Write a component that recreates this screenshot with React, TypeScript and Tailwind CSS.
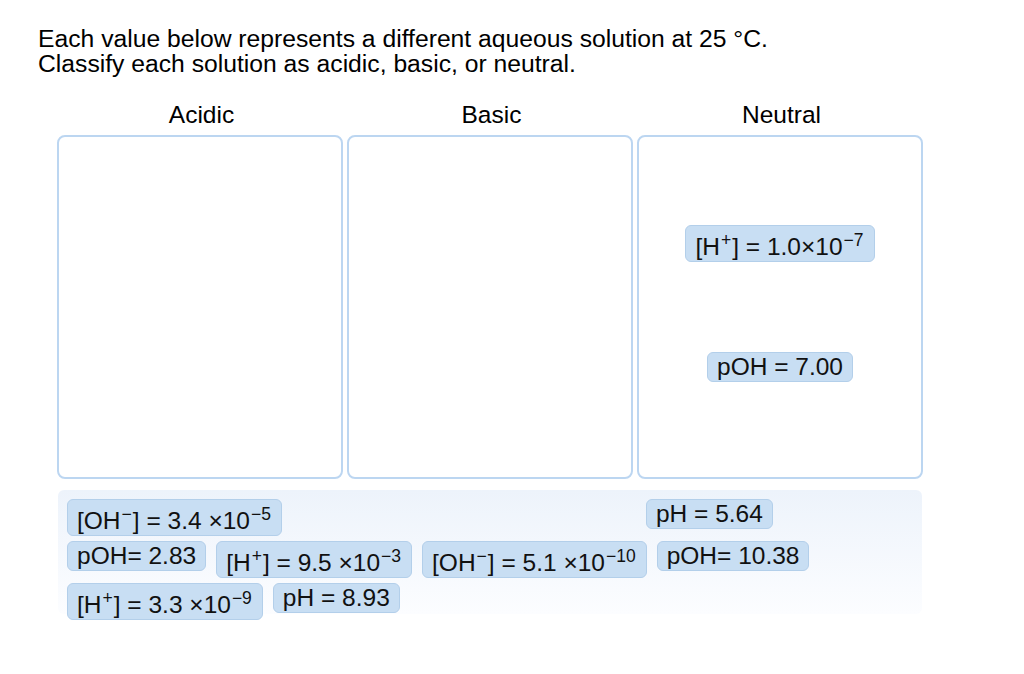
import React from 'react'

type Part = string | { sup: string }

type Chip = { id: string; parts: Part[] }

const sup = (s: string) => ({ sup: s })

const neutral: Chip[] = [
  { id: 'n1', parts: ['[H', sup('+'), '] = 1.0×10', sup('−7')] },
  { id: 'n2', parts: ['pOH = 7.00'] },
]

// unsorted answers, laid out in rows
const trayRows: { chip: Chip; ml?: string }[][] = [
  [
    { chip: { id: 't1', parts: ['[OH', sup('−'), '] = 3.4 ×10', sup('−5')] } },
    { chip: { id: 't2', parts: ['pH = 5.64'] }, ml: 'ml-[354px]' },
  ],
  [
    { chip: { id: 't3', parts: ['pOH= 2.83'] } },
    { chip: { id: 't4', parts: ['[H', sup('+'), '] = 9.5 ×10', sup('−3')] } },
    { chip: { id: 't5', parts: ['[OH', sup('−'), '] = 5.1 ×10', sup('−10')] } },
    { chip: { id: 't6', parts: ['pOH= 10.38'] } },
  ],
  [
    { chip: { id: 't7', parts: ['[H', sup('+'), '] = 3.3 ×10', sup('−9')] } },
    { chip: { id: 't8', parts: ['pH = 8.93'] } },
  ],
]

const ChipView = ({ chip, className = '' }: { chip: Chip; className?: string }) => {
  const hasSup = chip.parts.some((p) => typeof p !== 'string')
  return (
    <div
      className={`inline-block rounded-[6px] border border-[#b3cfea] bg-[#c8def3] px-[9px] text-[24.5px] leading-[28px] text-[#111] whitespace-nowrap ${
        hasSup ? 'pt-[7px]' : ''
      } ${className}`}
    >
      {chip.parts.map((p, i) =>
        typeof p === 'string' ? (
          <span key={i}>{p}</span>
        ) : (
          <sup key={i} className="text-[17.5px] mx-[1px]">
            {p.sup}
          </sup>
        )
      )}
    </div>
  )
}

export default function App() {
  const columns = ['Acidic', 'Basic', 'Neutral']

  return (
    <div
      className="w-[1024px] h-[674px] bg-white text-black overflow-hidden"
      style={{ fontFamily: '"Liberation Sans", Arial, sans-serif' }}
    >
      <div className="pl-[38px] pt-[26px] text-[24.7px] leading-[25px]">
        <p>Each value below represents a different aqueous solution at 25 °C.</p>
        <p>Classify each solution as acidic, basic, or neutral.</p>
      </div>

      <div className="ml-[57px] w-[866px]">
        <div className="grid grid-cols-3 gap-[4px] mt-[25px] text-[24.5px] leading-[28px]">
          {columns.map((c) => (
            <div key={c} className="text-center pl-[3px]">
              {c}
            </div>
          ))}
        </div>

        <div className="grid grid-cols-3 gap-[4px] mt-[6px]">
          <div className="h-[344px] rounded-[8px] border-2 border-[#bcd6f1]" />
          <div className="h-[344px] rounded-[8px] border-2 border-[#bcd6f1]" />
          <div className="h-[344px] rounded-[8px] border-2 border-[#bcd6f1] flex flex-col items-center pt-[88px] gap-[90px]">
            {neutral.map((c) => (
              <ChipView key={c.id} chip={c} />
            ))}
          </div>
        </div>

        <div className="mt-[11px] ml-[1px] w-[864px] h-[124px] rounded-[6px] bg-gradient-to-b from-[#edf3fb] to-[#fcfdff] pl-[9px] pt-[9px] flex flex-col gap-[5px]">
          {trayRows.map((row, r) => (
            <div key={r} className="flex items-start gap-[10px]">
              {row.map(({ chip, ml }) => (
                <ChipView key={chip.id} chip={chip} className={ml ?? ''} />
              ))}
            </div>
          ))}
        </div>
      </div>
    </div>
  )
}
